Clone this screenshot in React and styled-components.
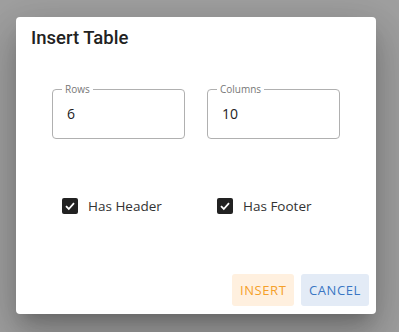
import React, { useState } from "react";
import styled, { createGlobalStyle } from "styled-components";

const GlobalStyle = createGlobalStyle`
  html, body {
    margin: 0;
    padding: 0;
    width: 399px;
    height: 332px;
    overflow: hidden;
    background: #a0a0a0;
  }
`;

const Page = styled.div`
  padding: 17px 0 0 16px;
`;

const Dialog = styled.div`
  width: 360px;
  height: 297px;
  background: #fff;
  border-radius: 4px;
  box-shadow: 0 11px 15px -7px rgba(0, 0, 0, 0.2),
    0 24px 38px 3px rgba(0, 0, 0, 0.14), 0 9px 46px 8px rgba(0, 0, 0, 0.12);
  display: flex;
  flex-direction: column;
  box-sizing: border-box;
`;

const Title = styled.h2`
  margin: 0;
  padding: 8px 15px 0;
  font-family: Roboto, sans-serif;
  font-weight: 500;
  font-size: 18.5px;
  line-height: 26px;
  color: #222;
`;

const Content = styled.div`
  flex: 1;
  padding: 33px 36px 0;
  font-family: "Open Sans", sans-serif;
`;

const FieldRow = styled.div`
  display: flex;
  gap: 22px;
`;

const Field = styled.fieldset`
  margin: 0;
  width: 133px;
  height: 55px;
  flex-shrink: 0;
  box-sizing: border-box;
  border: 1px solid #b0b0b0;
  border-radius: 4px;
  padding: 0 14px;
`;

const Legend = styled.legend`
  font-size: 10px;
  color: #777;
  padding: 0 3px;
  margin-left: -5px;
  line-height: 10px;
`;

const Value = styled.div`
  font-size: 14px;
  color: #222;
  line-height: 20px;
  margin-top: 10px;
`;

const CheckRow = styled.div`
  display: flex;
  margin-top: 58px;
  padding-left: 10px;
`;

const CheckLabel = styled.label`
  display: flex;
  align-items: center;
  gap: 10px;
  width: 155px;
  flex-shrink: 0;
  font-size: 13.5px;
  color: #333;
`;

const Box = styled.span`
  width: 16px;
  height: 16px;
  border-radius: 2px;
  background: #222;
  display: flex;
  align-items: center;
  justify-content: center;
`;

const Actions = styled.div`
  display: flex;
  justify-content: flex-end;
  gap: 7px;
  padding: 0 7px 8px;
`;

const Button = styled.button`
  height: 32px;
  padding: 0 ${(p) => p.$pad}px;
  border: none;
  border-radius: 3px;
  font-family: "Open Sans", sans-serif;
  font-size: 13px;
  letter-spacing: 0.6px;
  background: ${(p) => p.$bg};
  color: ${(p) => p.$fg};
`;

const Check = ({ label }) => (
  <CheckLabel>
    <Box>
      <svg width="12" height="12" viewBox="0 0 12 12">
        <path d="M2 6.2 L4.8 9 L10 3.2" fill="none" stroke="#fff" strokeWidth="1.8" />
      </svg>
    </Box>
    {label}
  </CheckLabel>
);

export default function App() {
  const [rows] = useState(6);
  const [cols] = useState(10);
  return (
    <Page>
      <GlobalStyle />
      <Dialog>
        <Title>Insert Table</Title>
        <Content>
          <FieldRow>
            <Field>
              <Legend>Rows</Legend>
              <Value>{rows}</Value>
            </Field>
            <Field>
              <Legend>Columns</Legend>
              <Value>{cols}</Value>
            </Field>
          </FieldRow>
          <CheckRow>
            <Check label="Has Header" />
            <Check label="Has Footer" />
          </CheckRow>
        </Content>
        <Actions>
          <Button $bg="#fff0df" $fg="#f5a02a" $pad={7.5}>INSERT</Button>
          <Button $bg="#e3ebf6" $fg="#3a76c4" $pad={8}>CANCEL</Button>
        </Actions>
      </Dialog>
    </Page>
  );
}
